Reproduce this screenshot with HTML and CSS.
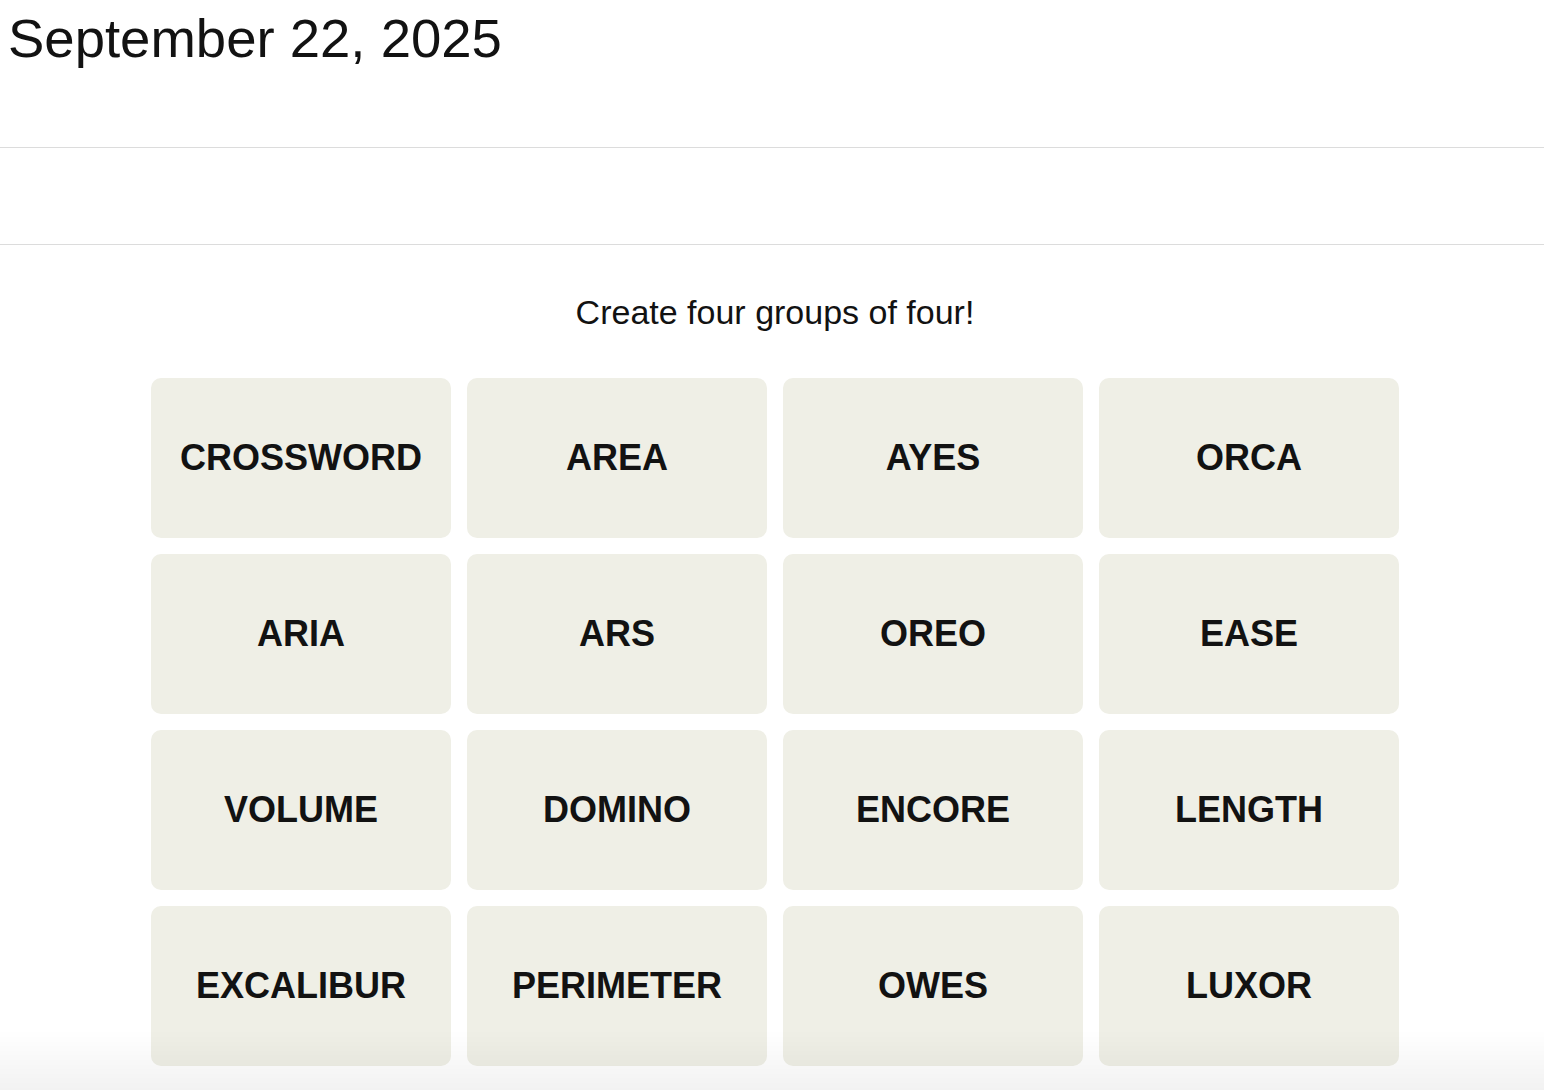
FILE: index.html
```html
<!DOCTYPE html>
<html lang="en">
<head>
<meta charset="utf-8">
<title>Connections</title>
<link rel="stylesheet" href="styles.css">
</head>
<body>
  <header class="date-header">
    <h1 class="date">September 22, 2025</h1>
  </header>
  <div class="band"></div>
  <main class="board">
    <p class="prompt">Create four groups of four!</p>
    <div class="grid">
      <div class="tile">CROSSWORD</div>
      <div class="tile">AREA</div>
      <div class="tile">AYES</div>
      <div class="tile">ORCA</div>
      <div class="tile">ARIA</div>
      <div class="tile">ARS</div>
      <div class="tile">OREO</div>
      <div class="tile">EASE</div>
      <div class="tile">VOLUME</div>
      <div class="tile">DOMINO</div>
      <div class="tile">ENCORE</div>
      <div class="tile">LENGTH</div>
      <div class="tile">EXCALIBUR</div>
      <div class="tile">PERIMETER</div>
      <div class="tile">OWES</div>
      <div class="tile">LUXOR</div>
    </div>
  </main>
  <div class="fade"></div>
</body>
</html>
```
FILE: styles.css
```css
html, body {
  margin: 0;
  padding: 0;
  background: #ffffff;
  color: #121212;
  font-family: "Liberation Sans", Arial, sans-serif;
}

.date-header {
  padding: 12px 0 0 8px;
  height: 148px;
  box-sizing: border-box;
  border-bottom: 1px solid #dcdcdc;
}

.date {
  margin: 0;
  font-size: 54.5px;
  line-height: 1;
  font-weight: 400;
  color: #121212;
}

.band {
  height: 96px;
  border-bottom: 1px solid #dcdcdc;
}

.board {
  display: flex;
  flex-direction: column;
  align-items: center;
  padding: 50px 0 40px 6px;
}

.prompt {
  margin: 0 0 49px;
  font-size: 34px;
  line-height: 1;
  color: #121212;
}

.grid {
  display: grid;
  grid-template-columns: repeat(4, 300px);
  grid-auto-rows: 160px;
  gap: 16px;
}

.tile {
  display: flex;
  align-items: center;
  justify-content: center;
  background: #efefe6;
  border-radius: 10px;
  font-size: 36px;
  font-weight: 700;
  color: #121212;
  text-transform: uppercase;
}

.fade {
  position: fixed;
  left: 0;
  right: 0;
  bottom: 0;
  height: 60px;
  background: linear-gradient(to bottom, rgba(0, 0, 0, 0), rgba(0, 0, 0, 0.05));
  pointer-events: none;
}
```
